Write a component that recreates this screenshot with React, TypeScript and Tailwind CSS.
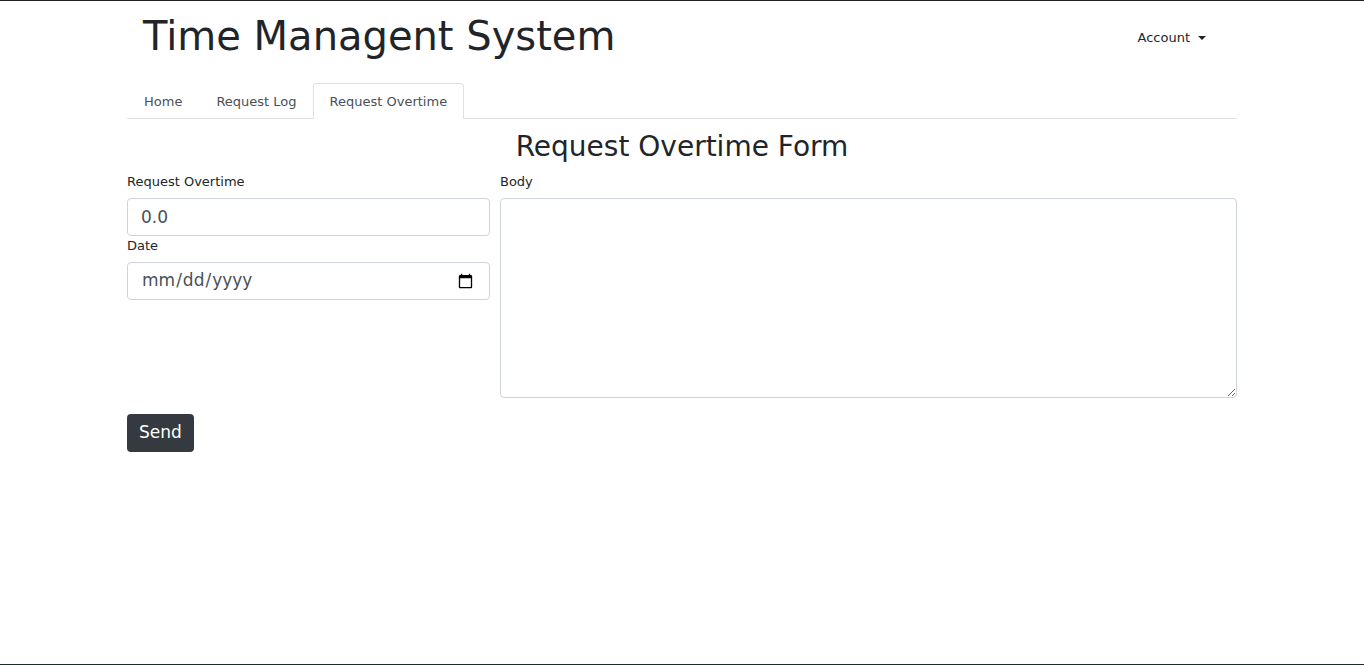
import { useState } from "react";

const font = { fontFamily: '"DejaVu Sans", Verdana, sans-serif' };

const tabs = ["Home", "Request Log", "Request Overtime"];

const App = () => {
  const [active, setActive] = useState("Request Overtime");
  const [hours, setHours] = useState("0.0");
  const [body, setBody] = useState("");

  return (
    <div className="min-h-[665px] bg-white border-t border-[#212121] border-b border-b-[#1b2a2e] text-[#212529] flex flex-col" style={font}>
      <div className="mx-auto w-[1110px] flex-1">
        {/* header */}
        <div className="flex items-center justify-between h-[70px] pl-4 pr-[31px]">
          <h1 className="text-[40px] leading-none font-normal text-[#212529] -mt-[1px]">Time Managent System</h1>
          <button className="flex items-center gap-2 text-[13px] text-[#212529] mt-[4px]">
            Account
            <span className="inline-block w-0 h-0 border-l-[4px] border-r-[4px] border-t-[4px] border-l-transparent border-r-transparent border-t-[#212529]" />
          </button>
        </div>

        {/* tabs */}
        <div className="flex mt-[12px] border-b border-[#dee2e6] h-[36px]">
          {tabs.map((t) => (
            <button
              key={t}
              onClick={() => setActive(t)}
              className={
                active === t
                  ? "px-4 pt-[2px] text-[13px] text-[#495057] bg-white border border-[#dee2e6] border-b-white rounded-t-[4px] -mb-px -ml-px"
                  : "px-4 pt-[2px] text-[13px] text-[#495057] border border-transparent"
              }
            >
              {t}
            </button>
          ))}
        </div>

        <h2 className="text-center text-[28px] leading-tight font-normal mt-[10px] mb-[8px]">Request Overtime Form</h2>

        <div className="flex gap-[10px]">
          <div className="w-[363px] flex flex-col">
            <label className="text-[13px] leading-[20px] mb-[6px]">Request Overtime</label>
            <input
              value={hours}
              onChange={(e) => setHours(e.target.value)}
              className="h-[38px] px-[13px] text-[17px] text-[#495057] border border-[#ced4da] rounded-[4px] outline-none"
              style={font}
            />
            <label className="text-[13px] leading-[20px] mb-[6px]">Date</label>
            <input
              type="date"
              className="h-[38px] px-[13px] text-[17px] text-[#495057] border border-[#ced4da] rounded-[4px] outline-none"
              style={font}
            />
          </div>
          <div className="flex-1 flex flex-col">
            <label className="text-[13px] leading-[20px] mb-[6px]">Body</label>
            <textarea
              value={body}
              onChange={(e) => setBody(e.target.value)}
              className="h-[200px] px-[13px] py-[6px] text-[17px] text-[#495057] border border-[#ced4da] rounded-[4px] outline-none"
              style={font}
            />
          </div>
        </div>

        <button className="mt-[16px] h-[38px] px-[12px] bg-[#343a40] text-white text-[17px] rounded-[4px]" style={font}>
          Send
        </button>
      </div>
    </div>
  );
};

export default App;
